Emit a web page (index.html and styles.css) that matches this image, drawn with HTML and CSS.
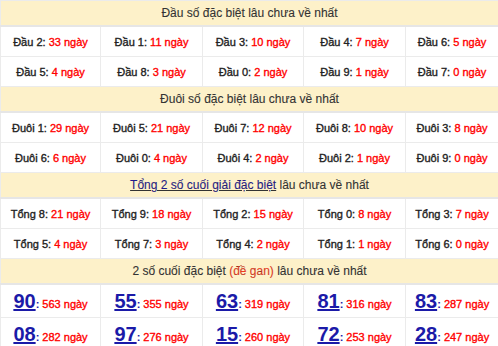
FILE: index.html
```html
<!DOCTYPE html>
<html lang="vi">
<head>
<meta charset="utf-8">
<link rel="stylesheet" href="styles.css">
</head>
<body>
<table class="gan">
  <colgroup>
    <col class="c1"><col class="c2"><col class="c3"><col class="c4"><col class="c5">
  </colgroup>
  <tr class="head"><td colspan="5">Đầu số đặc biệt lâu chưa về nhất</td></tr>
  <tr class="row">
    <td><span class="lb">Đầu 2:</span> <span class="val">33 ngày</span></td>
    <td><span class="lb">Đầu 1:</span> <span class="val">11 ngày</span></td>
    <td><span class="lb">Đầu 3:</span> <span class="val">10 ngày</span></td>
    <td><span class="lb">Đầu 4:</span> <span class="val">7 ngày</span></td>
    <td><span class="lb">Đầu 6:</span> <span class="val">5 ngày</span></td>
  </tr>
  <tr class="row">
    <td><span class="lb">Đầu 5:</span> <span class="val">4 ngày</span></td>
    <td><span class="lb">Đầu 8:</span> <span class="val">3 ngày</span></td>
    <td><span class="lb">Đầu 0:</span> <span class="val">2 ngày</span></td>
    <td><span class="lb">Đầu 9:</span> <span class="val">1 ngày</span></td>
    <td><span class="lb">Đầu 7:</span> <span class="val">0 ngày</span></td>
  </tr>
  <tr class="head"><td colspan="5">Đuôi số đặc biệt lâu chưa về nhất</td></tr>
  <tr class="row">
    <td><span class="lb">Đuôi 1:</span> <span class="val">29 ngày</span></td>
    <td><span class="lb">Đuôi 5:</span> <span class="val">21 ngày</span></td>
    <td><span class="lb">Đuôi 7:</span> <span class="val">12 ngày</span></td>
    <td><span class="lb">Đuôi 8:</span> <span class="val">10 ngày</span></td>
    <td><span class="lb">Đuôi 3:</span> <span class="val">8 ngày</span></td>
  </tr>
  <tr class="row">
    <td><span class="lb">Đuôi 6:</span> <span class="val">6 ngày</span></td>
    <td><span class="lb">Đuôi 0:</span> <span class="val">4 ngày</span></td>
    <td><span class="lb">Đuôi 4:</span> <span class="val">2 ngày</span></td>
    <td><span class="lb">Đuôi 2:</span> <span class="val">1 ngày</span></td>
    <td><span class="lb">Đuôi 9:</span> <span class="val">0 ngày</span></td>
  </tr>
  <tr class="head"><td colspan="5"><a class="hlink" href="#">Tổng 2 số cuối giải đặc biệt</a> lâu chưa về nhất</td></tr>
  <tr class="row">
    <td><span class="lb">Tổng 8:</span> <span class="val">21 ngày</span></td>
    <td><span class="lb">Tổng 9:</span> <span class="val">18 ngày</span></td>
    <td><span class="lb">Tổng 2:</span> <span class="val">15 ngày</span></td>
    <td><span class="lb">Tổng 0:</span> <span class="val">8 ngày</span></td>
    <td><span class="lb">Tổng 3:</span> <span class="val">7 ngày</span></td>
  </tr>
  <tr class="row">
    <td><span class="lb">Tổng 5:</span> <span class="val">4 ngày</span></td>
    <td><span class="lb">Tổng 7:</span> <span class="val">3 ngày</span></td>
    <td><span class="lb">Tổng 4:</span> <span class="val">2 ngày</span></td>
    <td><span class="lb">Tổng 1:</span> <span class="val">1 ngày</span></td>
    <td><span class="lb">Tổng 6:</span> <span class="val">0 ngày</span></td>
  </tr>
  <tr class="head"><td colspan="5">2 số cuối đặc biệt <span class="gan-red">(đề gan)</span> lâu chưa về nhất</td></tr>
  <tr class="row big">
    <td><a class="num" href="#">90</a><span class="colon">:</span> <span class="val">563 ngày</span></td>
    <td><a class="num" href="#">55</a><span class="colon">:</span> <span class="val">355 ngày</span></td>
    <td><a class="num" href="#">63</a><span class="colon">:</span> <span class="val">319 ngày</span></td>
    <td><a class="num" href="#">81</a><span class="colon">:</span> <span class="val">316 ngày</span></td>
    <td><a class="num" href="#">83</a><span class="colon">:</span> <span class="val">287 ngày</span></td>
  </tr>
  <tr class="row big">
    <td><a class="num" href="#">08</a><span class="colon">:</span> <span class="val">282 ngày</span></td>
    <td><a class="num" href="#">97</a><span class="colon">:</span> <span class="val">276 ngày</span></td>
    <td><a class="num" href="#">15</a><span class="colon">:</span> <span class="val">260 ngày</span></td>
    <td><a class="num" href="#">72</a><span class="colon">:</span> <span class="val">253 ngày</span></td>
    <td><a class="num" href="#">28</a><span class="colon">:</span> <span class="val">247 ngày</span></td>
  </tr>
</table>
</body>
</html>
```

FILE: styles.css
```css
html, body {
  margin: 0;
  padding: 0;
  background: #ffffff;
}

.gan {
  width: 498px;
  border-collapse: collapse;
  table-layout: fixed;
  border: 1px solid #c8c8c8;
  font-family: "Liberation Sans", Arial, sans-serif;
}

.c1 { width: 100px; }
.c2 { width: 102px; }
.c3 { width: 101px; }
.c4 { width: 102px; }
.c5 { width: 93px; }

.gan td {
  border: 1px solid #ebebeb;
  text-align: center;
  padding: 0;
  white-space: nowrap;
}

.head td {
  background: #fdf1c9;
  height: 24px;
  font-size: 12px;
  color: #333333;
  border-bottom: 2px solid #e6e6e6;
  -webkit-text-stroke: 0.1px #333333;
}

.row td {
  height: 29px;
  font-size: 11px;
  -webkit-text-stroke: 0.35px currentColor;
}

.big td {
  height: 32px;
}

.lb {
  color: #222222;
  -webkit-text-stroke: 0.35px #222222;
}

.val {
  color: #ff0000;
  -webkit-text-stroke: 0.35px #ff0000;
}

.hlink {
  color: #1f1a8f;
  text-decoration: underline;
}

.gan-red {
  color: #f03c1e;
}

.num {
  font-size: 20px;
  font-weight: bold;
  color: #1b1aa8;
  text-decoration: underline;
  -webkit-text-stroke: 0;
}

.colon {
  color: #1b1aa8;
  font-weight: bold;
  font-size: 11px;
  -webkit-text-stroke: 0;
}
```
